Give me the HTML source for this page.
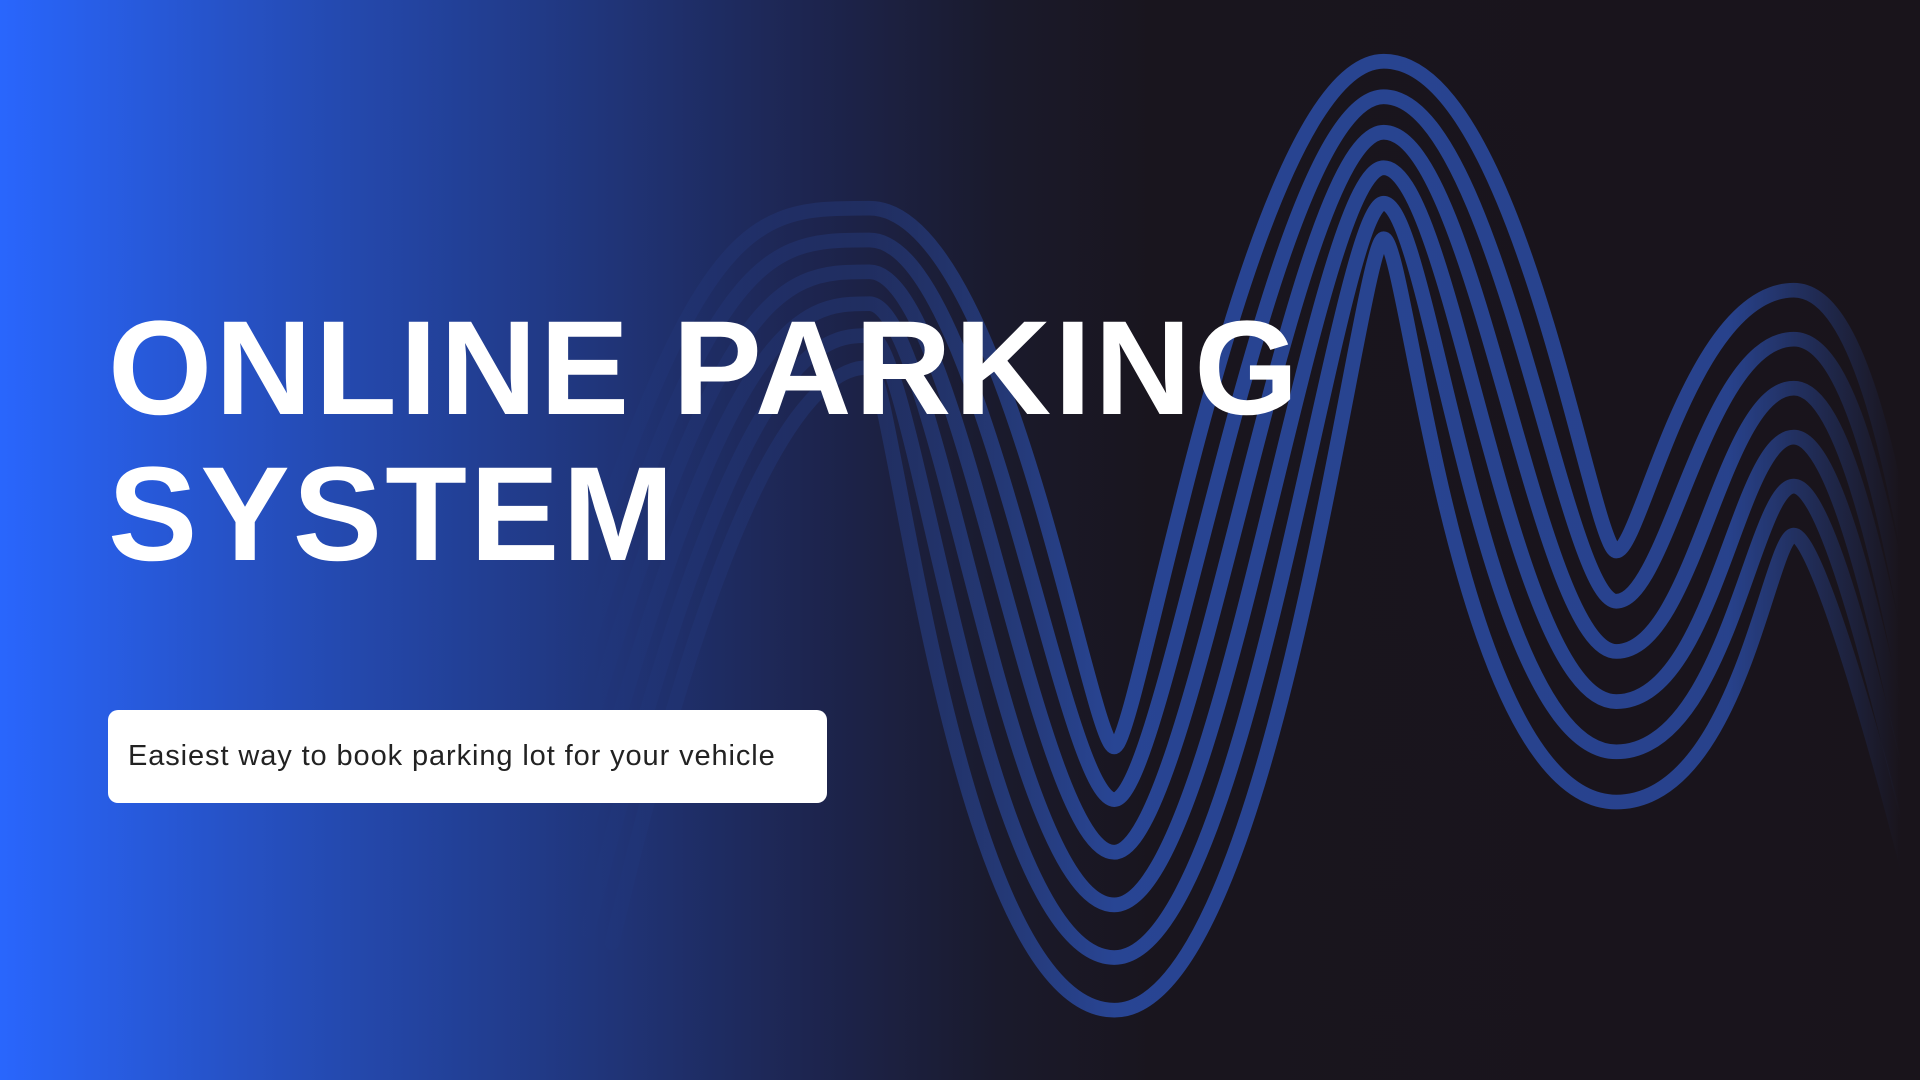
<!DOCTYPE html>
<html><head><meta charset="utf-8"><style>
html,body{margin:0;padding:0}
body{width:1920px;height:1080px;overflow:hidden;position:relative;background:linear-gradient(90deg,#2966fd 0%,#2652c6 12%,#213a87 28%,#1d2550 42%,#1a1a2c 52%,#19151e 60%,#19141b 100%)}
svg{position:absolute;left:0;top:0}
h1{position:absolute;left:108px;top:296px;margin:0;font-family:"Liberation Sans",sans-serif;font-weight:700;font-size:134px;line-height:146px;color:#fff;letter-spacing:3px}
.box{position:absolute;left:108px;top:710px;width:719px;height:93px;background:#fff;border-radius:10px;font-family:"Liberation Sans",sans-serif;font-size:29px;letter-spacing:0.9px;color:#222;line-height:93px;padding-left:20px;box-sizing:border-box}
</style></head><body>
<svg width="1920" height="1080" viewBox="0 0 1568 882">
<defs>
<linearGradient id="fade" x1="0" x2="1568" y1="0" y2="0" gradientUnits="userSpaceOnUse">
<stop offset="0.30" stop-color="#2a4aa0" stop-opacity="0"/>
<stop offset="0.45" stop-color="#2a4aa0" stop-opacity="0.3"/>
<stop offset="0.58" stop-color="#2a4aa0" stop-opacity="0.9"/>
<stop offset="0.9" stop-color="#2a4aa0" stop-opacity="0.85"/>
<stop offset="0.99" stop-color="#2a4aa0" stop-opacity="0"/>
</linearGradient>
</defs>
<g fill="none" stroke="url(#fade)" stroke-width="12" stroke-linecap="round" stroke-linejoin="round">
<path d="M400 720 C560 170 600 170 710 170 C820 170 890 610 910 610 C930 610 1020 50 1130 50 C1240 50 1300 450 1320 450 C1340 450 1380 237 1465 237 C1550 237 1570 600 1620 760"/>
<path d="M420 730 C570 196 618 196 710 196 C802 196 868 653 910 653 C952 653 1038 79 1130 79 C1222 79 1278 491 1320 491 C1362 491 1393 277 1465 277 C1537 277 1565 610 1610 760"/>
<path d="M440 740 C580 222 636 222 710 222 C784 222 846 696 910 696 C974 696 1056 108 1130 108 C1204 108 1256 532 1320 532 C1384 532 1406 317 1465 317 C1524 317 1560 620 1600 760"/>
<path d="M460 750 C590 248 654 248 710 248 C766 248 824 739 910 739 C996 739 1074 137 1130 137 C1186 137 1234 573 1320 573 C1400 573 1419 357 1465 357 C1511 357 1555 630 1590 760"/>
<path d="M480 760 C600 274 672 274 710 274 C748 274 802 782 910 782 C1018 782 1092 166 1130 166 C1168 166 1212 614 1320 614 C1410 614 1432 397 1465 397 C1498 397 1550 640 1580 760"/>
<path d="M500 770 C610 300 690 300 710 300 C730 300 780 825 910 825 C1040 825 1110 195 1130 195 C1150 195 1190 655 1320 655 C1420 655 1445 437 1465 437 C1485 437 1545 650 1570 760"/>
</g>
</svg>
<h1>ONLINE PARKING<br>SYSTEM</h1>
<div class="box">Easiest way to book parking lot for your vehicle</div>
</body></html>
